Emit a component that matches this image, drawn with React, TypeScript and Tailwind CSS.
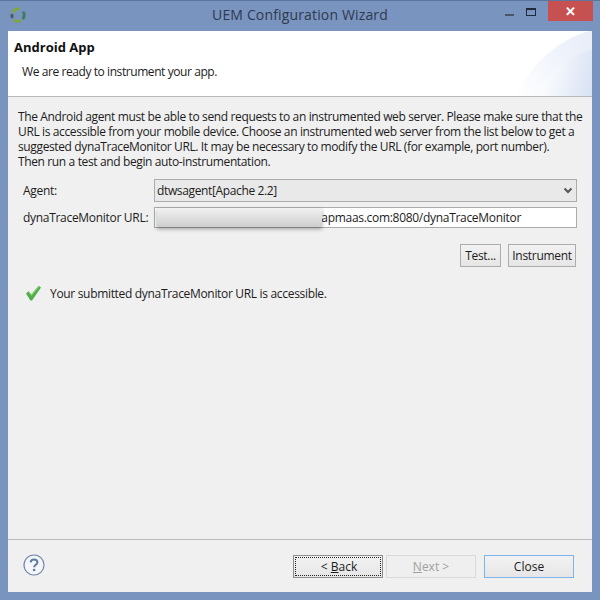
import React from "react";

function AppIcon() {
  return (
    <svg width="16" height="16" viewBox="0 0 16 16" fill="none" strokeWidth="2.8">
      <path d="M2.6 5.6A6 6 0 0 1 9.6 2.2" stroke="#7fa83c" />
      <path d="M13 4.6A6 6 0 0 1 12.6 12" stroke="#3f7d5c" />
      <path d="M10.8 13.4A6 6 0 0 1 4 12.8" stroke="#7fa83c" />
      <path d="M2.4 11A6 6 0 0 1 2.2 7" stroke="#4a5a55" />
    </svg>
  );
}

function CheckIcon() {
  return (
    <svg width="17" height="16" viewBox="0 0 17 16">
      <path d="M1 8.5 L3.6 6.2 L6.4 9.4 L13.6 0.8 L16 2.4 L7 15.5 L5.4 15.5 Z" fill="#4fae4a" />
      <path d="M3.6 6.2 L6.4 9.4 L13.6 0.8 L14.5 1.4 L6.6 11 L3 7 Z" fill="#84d070" />
    </svg>
  );
}

function HelpIcon() {
  return (
    <svg width="22" height="22" viewBox="0 0 22 22" fill="none">
      <circle cx="11" cy="11" r="10" fill="#f4f6f9" stroke="#6f88ad" strokeWidth="1.2" />
      <path d="M7.6 8.4C7.8 6.4 9.2 5.6 11 5.6c2 0 3.4 1.1 3.4 2.8 0 2.4-3.2 2.4-3.2 4.8" stroke="#5f7aa3" strokeWidth="2" />
      <circle cx="11.1" cy="16" r="1.3" fill="#5f7aa3" />
    </svg>
  );
}

function HeaderCorner() {
  return (
    <svg className="absolute bottom-0 right-0" width="76" height="66" viewBox="0 0 76 66">
      <defs>
        <linearGradient id="corner" x1="0" y1="1" x2="1" y2="0.4">
          <stop offset="0" stopColor="#ffffff" />
          <stop offset="1" stopColor="#e9eef9" />
        </linearGradient>
        <linearGradient id="cornerInner" x1="0" y1="0.6" x2="1" y2="0.8">
          <stop offset="0" stopColor="#ffffff" />
          <stop offset="1" stopColor="#d9e2f4" />
        </linearGradient>
      </defs>
      <path d="M0 66C14 36 40 10 76 0V66Z" fill="url(#corner)" />
      <path d="M22 66C32 40 52 24 76 20V66Z" fill="url(#cornerInner)" />
    </svg>
  );
}

function Btn({ className, children }: { className: string; children: React.ReactNode }) {
  return (
    <div className={`flex items-center justify-center border bg-gradient-to-b from-[#f2f2f2] to-[#e6e6e6] ${className}`}>
      {children}
    </div>
  );
}

export default function App() {
  return (
    <div
      className="flex h-[600px] w-[600px] flex-col overflow-hidden border-t border-[#5e769c] bg-[#7a94c0] text-[12px] leading-[15px] text-[#1c1c1c]"
      style={{ fontFamily: '"Open Sans", "Noto Sans", sans-serif' }}
    >
      {/* title bar */}
      <div className="relative flex h-[30px] shrink-0 items-center justify-center text-[14px] tracking-[0.15px] text-[#2e3a4e]">
        <div className="absolute left-[10px] top-[6px]">
          <AppIcon />
        </div>
        <span className="-mt-[3px]">UEM Configuration Wizard</span>
        <div className="absolute right-[7px] top-0 flex items-start">
          <div className="mr-[12px] mt-[13px] h-[2px] w-[9px] bg-[#4a5568]" />
          <div className="mr-[12px] mt-[7px] h-[8px] w-[10px] border border-t-[2px] border-[#1f2a3a]" />
          <div className="flex h-[20px] w-[45px] items-center justify-center bg-[#c75050] text-[13px] font-bold leading-none text-white">
            ✕
          </div>
        </div>
      </div>

      {/* client area */}
      <div className="mx-2 mb-2 flex min-h-0 flex-1 flex-col bg-[#f0f0f0]">
        <div className="relative h-[66px] shrink-0 overflow-hidden border-b border-[#b9b9b9] bg-white pl-[6px] pt-[8px]">
          <HeaderCorner />
          <div className="relative text-[13px] font-bold leading-[17px] text-[#111]">Android App</div>
          <div className="relative ml-[8px] mt-[8px] tracking-[-0.42px]">We are ready to instrument your app.</div>
        </div>

        <div className="flex min-h-0 flex-1 flex-col px-[10px] pt-[12px]">
          <p className="whitespace-nowrap tracking-[-0.37px]">
            The Android agent must be able to send requests to an instrumented web server. Please make sure that the
            <br />
            URL is accessible from your mobile device. Choose an instrumented web server from the list below to get a
            <br />
            suggested dynaTraceMonitor URL. It may be necessary to modify the URL (for example, port number).
            <br />
            Then run a test and begin auto-instrumentation.
          </p>

          <div className="mt-[10px] flex h-[23px] items-center pl-[5px]">
            <span className="w-[131px] shrink-0 tracking-[-0.3px]">Agent:</span>
            <div className="flex h-[23px] w-[423px] items-center justify-between border border-[#acacac] bg-[#e9e9e9] pl-[2px] pr-[3px] tracking-[-0.36px]">
              <span>dtwsagent[Apache 2.2]</span>
              <svg width="10" height="7" viewBox="0 0 10 7" fill="none">
                <path d="M1.5 1.5 5 5l3.5-3.5" stroke="#555" strokeWidth="2" />
              </svg>
            </div>
          </div>

          <div className="relative mt-[5px] flex h-[21px] items-center pl-[5px]">
            <span className="w-[131px] shrink-0 tracking-[-0.3px]">dynaTraceMonitor URL:</span>
            <div className="flex h-[21px] w-[423px] items-center justify-end border border-[#acacac] bg-white pr-[55px] tracking-[-0.3px]">
              apmaas.com:8080/dynaTraceMonitor
            </div>
            <div className="absolute left-[139px] top-[1px] h-[19px] w-[165px] bg-gradient-to-b from-[#f2f2f2] to-[#cdcdcd] shadow-[0_2px_4px_rgba(0,0,0,0.35)]" />
          </div>

          <div className="mt-[16px] flex justify-end gap-[7px] pr-[6px] tracking-[-0.3px]">
            <Btn className="h-[23px] w-[41px] border-[#acacac]">Test...</Btn>
            <Btn className="h-[23px] w-[68px] border-[#acacac]">Instrument</Btn>
          </div>

          <div className="mt-[18px] flex items-center pl-[7px]">
            <CheckIcon />
            <span className="ml-[8px] tracking-[-0.32px]">Your submitted dynaTraceMonitor URL is accessible.</span>
          </div>
        </div>

        {/* footer */}
        <div className="flex h-[53px] shrink-0 items-start border-t border-[#b9b9b9] pt-[14px]">
          <div className="ml-[15px]">
            <HelpIcon />
          </div>
          <div className="ml-auto mr-[18px] mt-[1px] flex gap-[3px]">
            <Btn className="h-[23px] w-[90px] border-[#8e8e8e] outline-1 -outline-offset-3 outline-dotted outline-[#222]">
              <span className="ml-[2px]">
                &lt; <span className="underline">B</span>ack
              </span>
            </Btn>
            <div className="flex h-[23px] w-[90px] items-center justify-center border border-[#d9d9d9] bg-[#efefef] text-[#a0a0a0]">
              <span>
                <span className="underline">N</span>ext &gt;
              </span>
            </div>
            <Btn className="ml-[5px] h-[23px] w-[90px] border-[#7eb4ea]">Close</Btn>
          </div>
        </div>
      </div>
    </div>
  );
}
